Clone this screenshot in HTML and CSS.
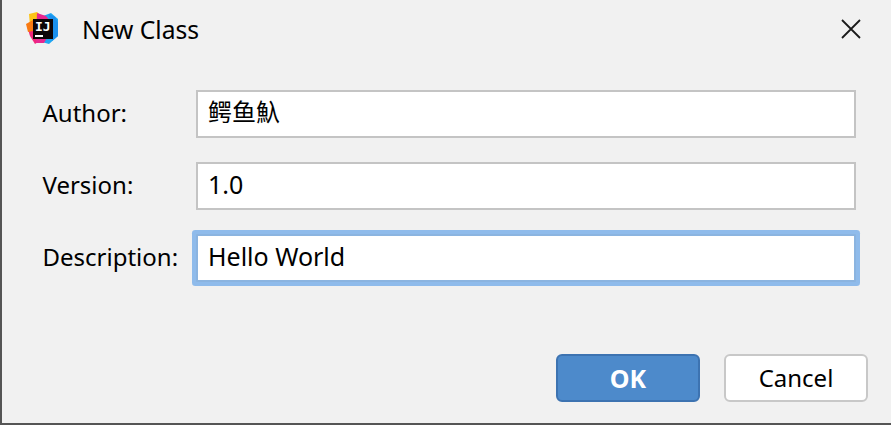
FILE: index.html
```html
<!DOCTYPE html>
<html lang="en">
<head>
    <meta charset="UTF-8">
    <title>New Class</title>
    <link rel="stylesheet" href="styles.css">
</head>
<body>
<div class="dialog">
    <div class="title-bar">
        <svg class="logo" width="36" height="36" viewBox="0 0 36 36">
            <polygon points="5,3 13,1 20,7 13,22 6,15" fill="#fcc419"/>
            <polygon points="3,15 11,11 17,29 11,33 6,25" fill="#f0267c"/>
            <polygon points="2,13 9,9 9,20 4,21" fill="#f97a12"/>
            <polygon points="19,5 27,2 34,8 34,25 25,33 14,30" fill="#1ea7f2"/>
            <polygon points="13,2 22,5 30,15 20,32 12,32" fill="#e8278f"/>
            <polygon points="25,3 31,6 34,12 34,25 28,30" fill="#1b90ee"/>
            <rect x="9" y="8" width="20" height="20" fill="#0c0508"/>
            <text class="logo-text" x="11" y="20">IJ</text>
            <rect x="11" y="24" width="8" height="2" fill="#fff"/>
        </svg>
        <span class="title">New Class</span>
        <svg class="close" width="20" height="20" viewBox="0 0 20 20">
            <path d="M1 1L19 19M19 1L1 19" stroke="#1a1a1a" stroke-width="1.8" fill="none"/>
        </svg>
    </div>
    <div class="form">
        <label>Author:</label>
        <div class="field cjk">鳄鱼魞</div>
        <label>Version:</label>
        <div class="field">1.0</div>
        <label>Description:</label>
        <div class="field focus">Hello World</div>
    </div>
    <div class="buttons">
        <div class="btn ok">OK</div>
        <div class="btn">Cancel</div>
    </div>
</div>
</body>
</html>
```

FILE: styles.css
```css
* {
    margin: 0;
    padding: 0;
    box-sizing: border-box;
}

body {
    width: 891px;
    height: 425px;
    overflow: hidden;
    background: #f1f1f1;
    font: 24px/32px "Noto Sans", "Noto Sans CJK SC", sans-serif;
    color: #000;
}

.dialog {
    height: 425px;
    display: flex;
    flex-direction: column;
    border-left: 2px solid #555;
    border-bottom: 2px solid #555;
}

.title-bar {
    height: 58px;
    display: flex;
    align-items: center;
    padding: 0 30px 0 22px;
}

.logo {
    margin-right: 22px;
}

.logo-text {
    font: bold 13px "DejaVu Sans Mono", monospace;
    fill: #fff;
}

.title {
    flex: 1;
    font-size: 24.6px;
    margin-top: 1px;
}

.form {
    margin-top: 32px;
    padding-left: 40.5px;
    padding-right: 33px;
    display: grid;
    grid-template-columns: 153.5px 660px;
    grid-auto-rows: 48px;
    row-gap: 24px;
    align-items: center;
}

.form label {
    margin-top: -2px;
}

.field {
    height: 48px;
    padding: 4px 10px;
    background: #fff;
    border: 2px solid #c4c4c4;
    font-size: 25px;
}

.field.cjk {
    font-size: 24px;
}

.field.focus {
    border-color: #8bb4e0;
    box-shadow: 0 0 0 4px #8fbbeb;
    border-radius: 1px;
}

.buttons {
    margin-top: 72px;
    padding-right: 23px;
    display: flex;
    justify-content: flex-end;
    gap: 24px;
}

.btn {
    width: 144px;
    height: 48px;
    background: #fff;
    border: 2px solid #c8c8c8;
    border-radius: 6px;
    text-align: center;
    line-height: 44px;
}

.btn.ok {
    background: #4d8acb;
    border-color: #3d73b1;
    color: #fff;
    font-weight: bold;
    font-size: 25px;
}
```
